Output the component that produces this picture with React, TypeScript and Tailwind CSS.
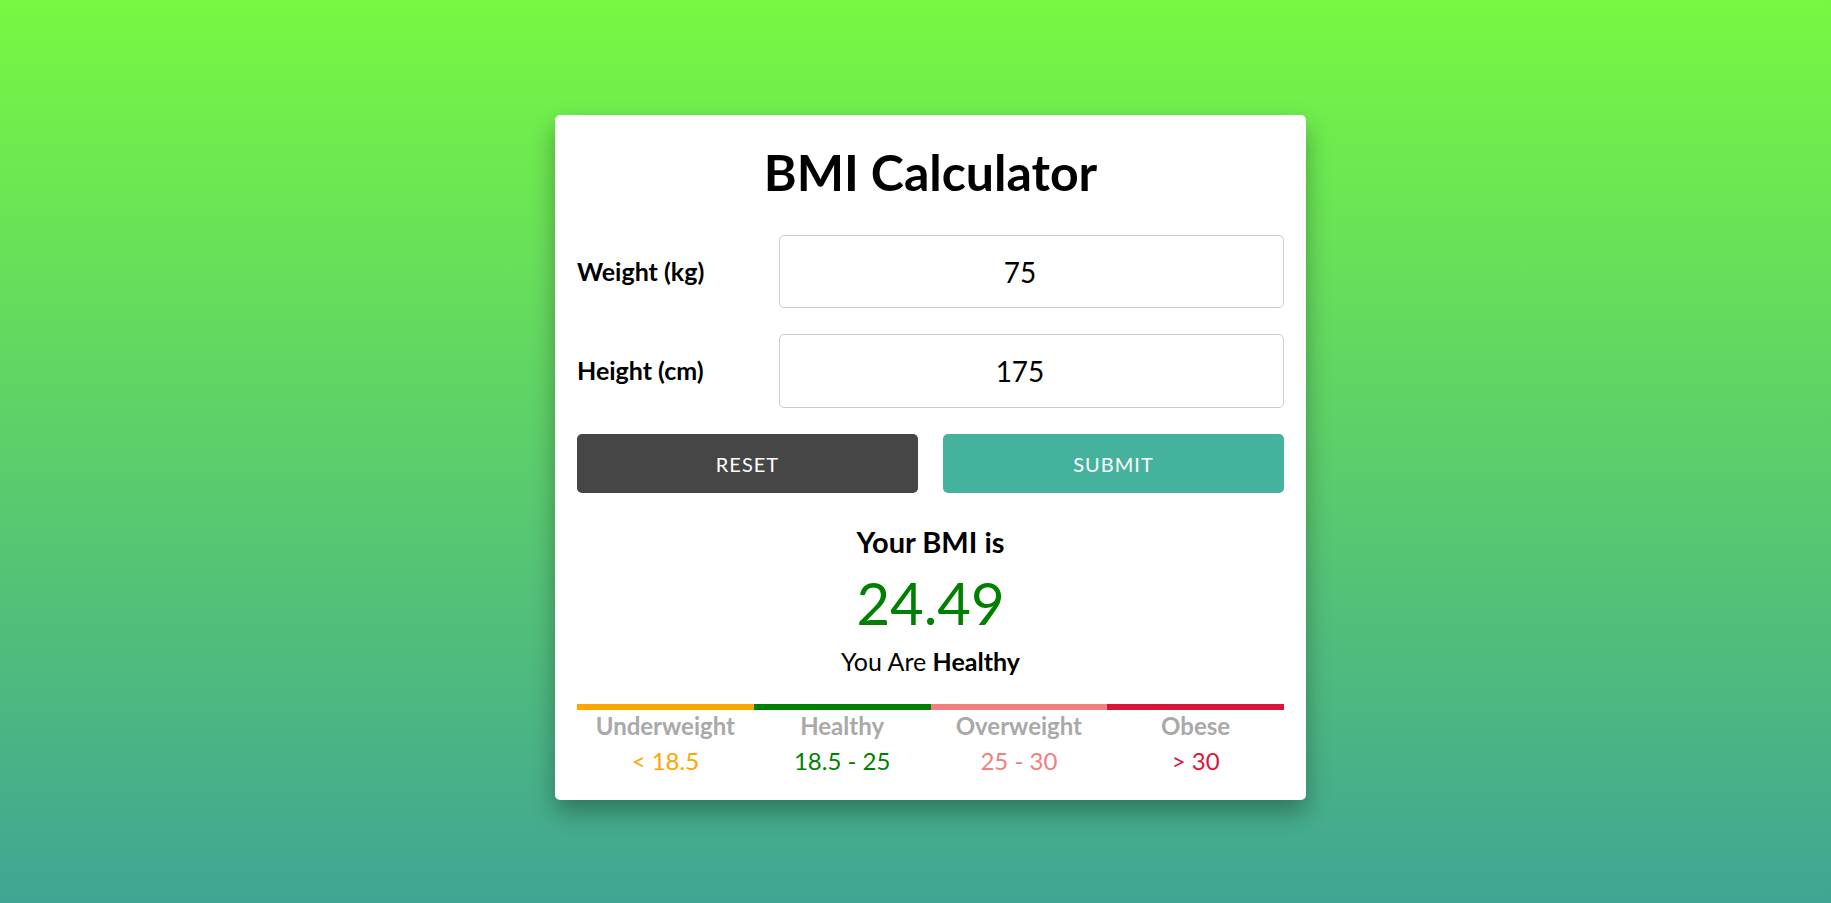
import React, { useState } from "react";

const ranges = [
  { name: "Underweight", value: "< 18.5", bar: "bg-[#ffa500]", text: "text-[#ffa500]" },
  { name: "Healthy", value: "18.5 - 25", bar: "bg-[#008000]", text: "text-[#008000]" },
  { name: "Overweight", value: "25 - 30", bar: "bg-[#f08080]", text: "text-[#f08080]" },
  { name: "Obese", value: "> 30", bar: "bg-[#dc143c]", text: "text-[#dc143c]" },
];

const App = () => {
  const [weight, setWeight] = useState("75");
  const [height, setHeight] = useState("175");

  return (
    <div className="min-h-screen w-full bg-[linear-gradient(to_bottom,#77f842,#40a594)] flex justify-center pl-[30px] pt-[115px] font-['Lato',sans-serif]">
      <div className="w-[751px] h-[685px] bg-white rounded-[5px] shadow-[0_12px_24px_rgba(0,0,0,0.32)] px-[22px] pt-[27px] pb-[25px] flex flex-col">
        {/* HEADING */}
        <h1 className="text-center text-[50px] leading-[60px] font-bold text-black">
          BMI Calculator
        </h1>

        {/* FORM */}
        <div className="mt-[33px] flex flex-col gap-[26px]">
          <div className="flex items-center">
            <label className="w-[202px] text-[25px] font-bold text-black">Weight (kg)</label>
            <input
              type="text"
              value={weight}
              onChange={(e) => setWeight(e.target.value)}
              className="flex-1 h-[73px] border border-[#cccccc] rounded-[5px] pr-[23px] text-center text-[28px] text-black outline-none"
            />
          </div>
          <div className="flex items-center">
            <label className="w-[202px] text-[25px] font-bold text-black">Height (cm)</label>
            <input
              type="text"
              value={height}
              onChange={(e) => setHeight(e.target.value)}
              className="flex-1 h-[74px] border border-[#cccccc] rounded-[5px] pr-[23px] text-center text-[28px] text-black outline-none"
            />
          </div>
          <div className="flex gap-[25px]">
            <button
              type="button"
              className="flex-1 h-[59px] rounded-[5px] bg-[#464646] text-white text-[20px] tracking-[1px] uppercase"
            >
              Reset
            </button>
            <button
              type="button"
              className="flex-1 h-[59px] rounded-[5px] bg-[#45b29d] text-white text-[20px] tracking-[1px] uppercase"
            >
              Submit
            </button>
          </div>
        </div>

        {/* RESULT */}
        <div className="mt-[34px] flex flex-col items-center">
          <h2 className="text-[29px] leading-[29px] font-bold text-black">Your BMI is</h2>
          <div className="mt-[14px] text-[58px] leading-[65px] text-[#008000]">24.49</div>
          <p className="mt-[13px] text-[25px] leading-[26px] text-black">
            You Are <span className="font-bold">Healthy</span>
          </p>
        </div>

        {/* SCALE */}
        <div className="mt-[30px] grid grid-cols-4">
          {ranges.map((r) => (
            <div key={r.name} className="flex flex-col items-center">
              <div className={`w-full h-[6px] ${r.bar}`} />
              <span className="mt-[3px] text-[24px] leading-[25px] font-bold text-[#a9a9a9]">{r.name}</span>
              <span className={`mt-[10px] text-[24px] leading-[26px] ${r.text}`}>{r.value}</span>
            </div>
          ))}
        </div>
      </div>
    </div>
  );
};

export default App;
